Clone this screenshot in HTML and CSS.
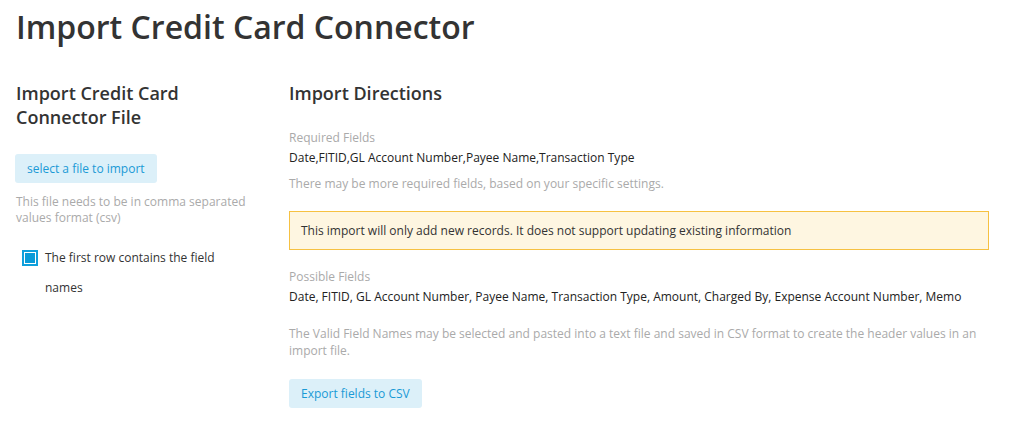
FILE: index.html
```html
<!DOCTYPE html>
<html lang="en">
<head>
  <meta charset="UTF-8">
  <meta name="viewport" content="width=device-width, initial-scale=1.0">
  <title>Import Credit Card Connector</title>
  <link rel="stylesheet" href="styles.css">
</head>
<body>
  <h1 class="page-title">Import Credit Card Connector</h1>

  <div class="import-layout">
    <div class="import-file">
      <h2>Import Credit Card Connector File</h2>
      <button class="btn-light">select a file to import</button>
      <p class="hint">This file needs to be in comma separated values format (csv)</p>
      <label class="check-row">
        <span class="check-box"><span class="check-fill"></span></span>
        <span class="check-label">The first row contains the field names</span>
      </label>
    </div>

    <div class="import-directions">
      <h2>Import Directions</h2>

      <div class="field-group">
        <div class="field-label">Required Fields</div>
        <div class="field-list">Date,FITID,GL Account Number,Payee Name,Transaction Type</div>
      </div>
      <p class="hint">There may be more required fields, based on your specific settings.</p>

      <div class="notice">This import will only add new records. It does not support updating existing information</div>

      <div class="field-group">
        <div class="field-label">Possible Fields</div>
        <div class="field-list">Date, FITID, GL Account Number, Payee Name, Transaction Type, Amount, Charged By, Expense Account Number, Memo</div>
      </div>
      <p class="hint hint-wide">The Valid Field Names may be selected and pasted into a text file and saved in CSV format to create the header values in an import file.</p>

      <button class="btn-light">Export fields to CSV</button>
    </div>
  </div>
</body>
</html>
```

FILE: styles.css
```css
body {
  font-family: "Open Sans", Arial, sans-serif;
  margin: 0;
  padding: 0 16px;
  background-color: #fff;
  color: #333;
}
.page-title {
  font-size: 32px;
  font-weight: 600;
  line-height: 46px;
  margin: 4px 0 31px;
  color: #333;
}
.import-layout {
  display: flex;
  gap: 39px;
}
.import-file {
  width: 234px;
  flex-shrink: 0;
}
.import-directions {
  width: 700px;
}
h2 {
  font-size: 18px;
  font-weight: 600;
  line-height: 24px;
  margin: 0 0 23px;
  color: #333;
}
.import-file h2 {
  margin-bottom: 25px;
}
.btn-light {
  font-family: inherit;
  font-size: 12px;
  color: #1a9ad6;
  background-color: #dcf0f9;
  border: none;
  border-radius: 3px;
  height: 29px;
  padding: 0 12px;
  cursor: pointer;
}
.import-file .btn-light {
  margin-left: -1px;
}
.hint {
  font-size: 12px;
  line-height: 16px;
  color: #aaa;
  margin: 0;
}
.import-file .hint {
  margin-top: 11px;
}
.check-row {
  display: flex;
  align-items: flex-start;
  gap: 7px;
  margin-top: 17px;
  padding-left: 6px;
  font-size: 12px;
  line-height: 30px;
  color: #333;
}
.check-box {
  width: 16px;
  height: 16px;
  box-sizing: border-box;
  border: 2px solid #0fa0dc;
  padding: 1px;
  margin-top: 7px;
  flex-shrink: 0;
  background: #fff;
}
.check-fill {
  display: block;
  width: 100%;
  height: 100%;
  background: #0a9bd8;
}
.field-group {
  font-size: 12px;
  line-height: 20px;
}
.field-label {
  color: #aaa;
}
.field-list {
  color: #222;
}
.import-directions .hint {
  margin-top: 8px;
}
.notice {
  margin: 19px 0 17px;
  padding: 10px 11px;
  font-size: 12px;
  line-height: 17px;
  color: #333;
  background-color: #fef6e1;
  border: 1px solid #f6c142;
}
.import-directions .hint-wide {
  line-height: 17px;
  margin-top: 18px;
  margin-bottom: 20px;
}
```
